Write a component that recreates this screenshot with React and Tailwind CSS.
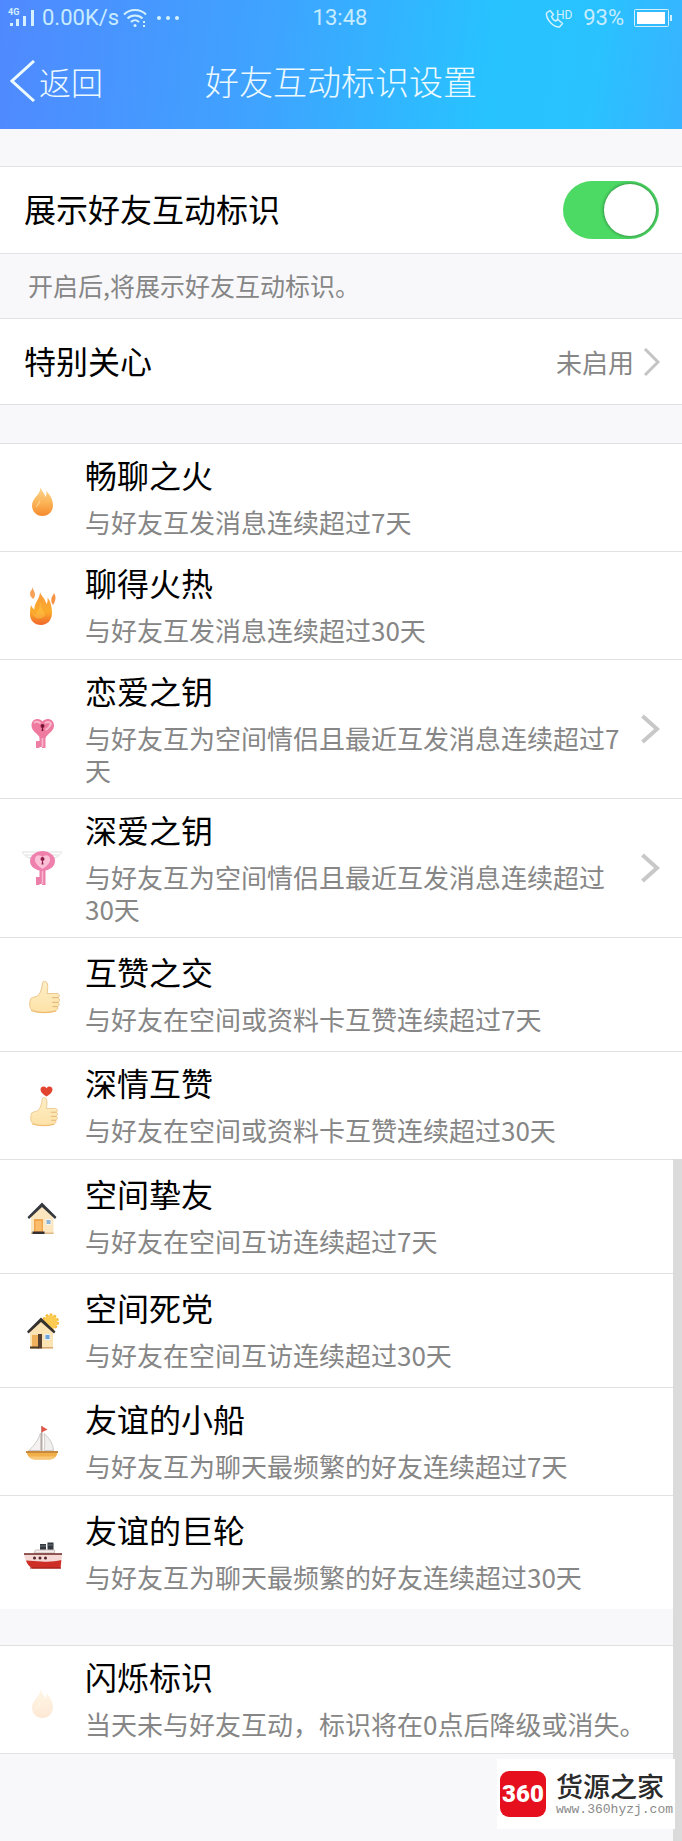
import { useState } from "react"

function Flame() {
  return (
    <>
      <defs>
        <linearGradient id="flame" x1="0" y1="0" x2="0" y2="1">
          <stop offset="0" stopColor="#fbd792" />
          <stop offset="0.55" stopColor="#fbb355" />
          <stop offset="1" stopColor="#f58a2e" />
        </linearGradient>
      </defs>
      <path
        d="M20.500 11c1 4 4 6 5 10 1-2 1.200-4 .9-6 3 3 6.600 8.500 6.600 14 0 6.500-4.500 11-10.500 11S12 35.500 12 29.500c0-4 2-6.500 4.500-9.500 2-2.500 4.200-5 4-9z"
        fill="url(#flame)"
      />
      <path d="M20 22c.5 4-4 5-4 10 2-3 5-4 4-10z" fill="#ffe0a4" opacity="0.6" />
    </>
  )
}

function BigFlame() {
  return (
    <>
      <defs>
        <linearGradient id="bigFlame" x1="0" y1="0" x2="0" y2="1">
          <stop offset="0" stopColor="#fb9a3c" />
          <stop offset="0.6" stopColor="#fbab2b" />
          <stop offset="1" stopColor="#f0652a" />
        </linearGradient>
      </defs>
      <path
        d="M20 8c1 4 5 6 6.500 12 1-1.500 1.400-4 1-6.500C30.500 17 32 23 32 29c0 7-4.500 12-11 12S10 36.500 10 30.500c0-5 .5-7 1-9.500 1 2 2 3.500 3.300 4.500C14.500 18 20 14.500 20 8z"
        fill="url(#bigFlame)"
      />
      <path d="M12 27c1 2 1.500 3 3 3.500C19 27 20 22 20.500 18c1 5 1 9 5 12-2 6-12 7-13.500-3z" fill="#ffc64a" opacity="0.5" />
      <path d="M12.500 3c.3 3 2.500 4.500 2.500 7.500 0 2-1 3.500-2 4.500-1.500-1.500-3-3-3-5.500C10 7 12.300 6 12.500 3z" fill="#f8a158" />
      <path d="M34 9c1.500 2 2 5 1 8-.4 1.500-1.200 2.700-2 4-1.200-2-2-3-1.700-6 .2-2.500 2.200-4 2.700-6z" fill="#f69345" />
    </>
  )
}

function HeartKey() {
  return (
    <>
      <path d="M19.500 28h6v13h-3.500v-1h-2.500v1h-3.500v-7h3.500z" fill="#ee7fa4" />
      <path d="M22.500 29v11" stroke="#f9b9cd" strokeWidth="1.500" />
      <path d="M22.500 14.500c-2.500-4-11-3.500-11 4 0 6 7 8.500 8.500 12.500h5.500c1.500-4 8.500-6.500 8.500-12.500 0-7.500-9-8-11.500-4z" fill="#ef7aa0" />
      <path d="M14 16c1.500-2 5-1.500 6.500.5M25 16.500c1.500-2 4.500-2 6 0-1 3-3 5-5.500 6.500" stroke="#f9b8cc" strokeWidth="2" fill="none" />
      <circle cx="22.500" cy="19" r="2" fill="#7b1437" />
      <path d="M22.500 18.500l1 5.500h-2z" fill="#7b1437" />
    </>
  )
}

function WingedKey() {
  return (
    <>
      <path d="M2 6h40M5 9h8M31 9h8M8 11.500h6M30 11.500h6" stroke="#e2e0e1" strokeWidth="1" fill="none" />
      <path d="M2.500 6.500c2 3 4 5 9 6M41.500 6.500c-2 3-4 5-9 6" stroke="#e4e1e2" strokeWidth="1" fill="none" />
      <path d="M19.500 23h6v16h-3.500v-1h-2.500v1h-3.500v-8h3.500z" fill="#ec7fa9" />
      <path d="M22.500 25v13" stroke="#f8b9d0" strokeWidth="1.500" />
      <ellipse cx="22.500" cy="15" rx="12.500" ry="10" fill="#ef7fac" />
      <path d="M22.500 23c-6-4-8-7-7.500-10.500.5-4 6-4.500 7.500-1 1.500-3.500 7-3 7.500 1 .5 3.500-1.500 6.500-7.500 10.500z" fill="#fac0d6" />
      <circle cx="22.500" cy="13" r="2" fill="#8e1c48" />
      <path d="M22.500 13l1 5.500h-2z" fill="#8e1c48" />
    </>
  )
}

function ThumbShape() {
  return (
    <>
      <defs>
        <linearGradient id="thumb" x1="0" y1="0" x2="0" y2="1">
          <stop offset="0" stopColor="#fdeec6" />
          <stop offset="1" stopColor="#fde2a8" />
        </linearGradient>
      </defs>
      <path
        d="M22.500 10c.3-2.500 4.500-2 5 1 .4 3 .2 6-.5 9.500h10c2.600 0 3 3.500 1 4.200 2 .8 2 3.800.2 4.600 1.500 1 1.200 3.600-.6 4.300.8 1.900-.5 3.900-2.800 4.400-5 1.500-12.500 1.700-17 .7-3-.6-6-1.500-7.200-3-1.300-2.500-1.200-7 .2-10.200 2-1.500 5-1.500 6.700-2.500 3-2.500 4.500-7.500 5-13z"
        fill="url(#thumb)"
        stroke="#ecc78c"
        strokeWidth="1"
      />
      <path d="M38 24.700h-6M38.200 29.300h-6M37.500 33.600h-5" stroke="#e2b070" strokeWidth="1" fill="none" />
      <path d="M11 37.500c6 2.500 17 3 25 .5" stroke="#f0b760" strokeWidth="1" fill="none" />
    </>
  )
}

function HeartThumb() {
  return (
    <>
      <path d="M26.500 12.500c-4-2.500-6-4.500-6-7 0-3.500 4.500-4.200 6-1.200 1.500-3 6-2.300 6 1.200 0 2.500-2 4.500-6 7z" fill="#e2452f" />
      <g transform="translate(2 6) scale(0.900)">
        <ThumbShape />
      </g>
    </>
  )
}

function HouseShape() {
  return (
    <>
      <path d="M11 21L22 10l11.500 11v18H11z" fill="#fbe6c0" />
      <path d="M11 39h22.500v-1.500H11z" fill="#e0b988" />
      <path d="M7.500 22L22 7.500 36.500 22 35 24 22 12 9 24z" fill="#35393e" />
      <path d="M14 24h9v13h-9z" fill="#f1a54f" />
      <path d="M15.500 26h6v10h-6z" fill="#fbbd6c" />
      <path d="M26 24.500h5v5h-5z" fill="#8fb4d6" stroke="#f6f2ec" strokeWidth="1" />
      <path d="M12.500 36.500h12V39h-12z" fill="#343030" />
    </>
  )
}

function SunnyHouse() {
  return (
    <>
      <circle cx="30.500" cy="13" r="7" fill="none" stroke="#f5b836" strokeWidth="3" strokeDasharray="2.500 1.500" />
      <circle cx="30.500" cy="13" r="7" fill="#fbcb52" />
      <path d="M10 22l11-11 12 11v17.500H10z" fill="#fbe3b4" />
      <path d="M10 39.500h23V38H10z" fill="#d9a871" />
      <path d="M7 22.500L21 8.500l14.500 14-1.500 2L21 13 8.500 24.500z" fill="#35322f" />
      <path d="M12 26h7v13h-7z" fill="#efb05c" />
      <path d="M18 25h4v14.500h-4z" fill="#574030" />
      <path d="M25 25.500h5v5h-5z" fill="#6aa3d8" stroke="#e8eef4" strokeWidth="1" />
      <path d="M10 37.500h9v2h-9z" fill="#4c3926" />
    </>
  )
}

function Sailboat() {
  return (
    <>
      <path d="M21 6h1.500v27H21z" fill="#b7aaa2" />
      <path d="M21.500 6l6 3.500-6 3z" fill="#e2564a" />
      <path d="M20.500 13v17.500H8.500C13 27 18 21 20.500 13z" fill="#f4f1f0" stroke="#cfcaca" strokeWidth="1" />
      <path d="M24 13.500c5 4 9 10 9.500 17H24c1-6 1-11 0-17z" fill="#f1eeee" stroke="#cfcaca" strokeWidth="1" />
      <path d="M6.500 31.500h31c0 4-3 8-8 8H15c-5 0-8-4-8.500-8z" fill="#f2b04a" />
      <path d="M6 31h32v2H6z" fill="#c98a3e" />
      <path d="M9 36.500c1.500 2 3.500 3 6 3h14.500c2.500 0 4.500-1 6-3z" fill="#f8c777" />
    </>
  )
}

function Steamship() {
  return (
    <>
      <path d="M20 13h6v7h-6zM27.500 11.500h6V20h-6z" fill="#33393e" />
      <path d="M20 15h6M27.500 14h6" stroke="#6d757b" strokeWidth="1" />
      <path d="M14 22l1.500-3h19v3z" fill="#f5efee" stroke="#c9bfbd" strokeWidth="1" />
      <path d="M4 23h38l-1 14.500H12C7.500 34.500 5 29 4 23z" fill="#f4d9d6" />
      <path d="M6 29.500c1 3 3 6 6.500 8h28l.8-8.500c-6 1.500-12 2-20 1.500z" fill="#cd2f27" />
      <path d="M4 23h38" stroke="#6e2522" strokeWidth="1.500" />
      <path d="M10 37h31" stroke="#9c1f1a" strokeWidth="1" />
      <circle cx="14.500" cy="27" r="1.500" fill="#54282a" />
      <circle cx="20" cy="27" r="1.500" fill="#54282a" />
      <circle cx="25.500" cy="27" r="1.500" fill="#54282a" />
    </>
  )
}

const badges = [
  { title: "畅聊之火", desc: "与好友互发消息连续超过7天", icon: Flame },
  { title: "聊得火热", desc: "与好友互发消息连续超过30天", icon: BigFlame },
  { title: "恋爱之钥", desc: "与好友互为空间情侣且最近互发消息连续超过7天", icon: HeartKey, link: true },
  { title: "深爱之钥", desc: "与好友互为空间情侣且最近互发消息连续超过30天", icon: WingedKey, link: true },
  { title: "互赞之交", desc: "与好友在空间或资料卡互赞连续超过7天", icon: ThumbShape, roomy: true },
  { title: "深情互赞", desc: "与好友在空间或资料卡互赞连续超过30天", icon: HeartThumb },
  { title: "空间挚友", desc: "与好友在空间互访连续超过7天", icon: HouseShape, roomy: true },
  { title: "空间死党", desc: "与好友在空间互访连续超过30天", icon: SunnyHouse, roomy: true },
  { title: "友谊的小船", desc: "与好友互为聊天最频繁的好友连续超过7天", icon: Sailboat },
  { title: "友谊的巨轮", desc: "与好友互为聊天最频繁的好友连续超过30天", icon: Steamship, roomy: true },
]

function BadgeRow({ title, desc, icon: Icon, link, roomy, faded }) {
  const Row = link ? "button" : "div"
  const padding = roomy ? "pt-[10px] pb-4" : link ? "pt-[7px] pb-3" : "pt-[7px] pb-[13px]"

  return (
    <li className="border-t border-[#e1e1e3] bg-white">
      <Row className="flex w-full items-center pl-5 pr-5 text-left">
        <svg
          viewBox="0 0 44 44"
          className={`size-11 shrink-0 ${faded ? "opacity-20" : ""}`}
          aria-hidden="true"
        >
          <Icon />
        </svg>
        <span className={`ml-[21px] block min-w-0 flex-1 ${padding}`}>
          <span className="block text-[32px] leading-[46px] text-black">{title}</span>
          <span className="mt-[9px] block text-[26px] leading-8 text-[#868686]">{desc}</span>
        </span>
        {link && (
          <svg viewBox="0 0 22 30" className="ml-3 h-[30px] w-[22px] shrink-0" aria-hidden="true">
            <path d="M2.500 2L17 15 2.500 28" fill="none" stroke="#c8c8c8" strokeWidth="4" />
          </svg>
        )}
      </Row>
    </li>
  )
}

function StatusBar() {
  return (
    <div className="grid h-9 grid-cols-[1fr_auto_1fr] items-center pl-2 pr-[10px] font-['Roboto',sans-serif] text-[22px] leading-none text-[#c8ecff]">
      <div className="flex items-center">
        <svg viewBox="0 0 28 22" className="h-[22px] w-7" fill="#d5f1ff" aria-hidden="true">
          <text x="0" y="8" fontSize="9" fontWeight="700">4G</text>
          <path d="M2 16h3v3H2zM8 12h3v7H8zM15 9h3v10h-3zM23 3h3v16h-3z" />
        </svg>
        <span className="ml-[6px]">0.00K/s</span>
        <svg viewBox="0 0 24 20" className="ml-1 h-5 w-6" fill="none" stroke="#d5f1ff" strokeWidth="2" aria-hidden="true">
          <path d="M1 6.500c6-6 16-6 22 0M4.500 10.500c4-4 11-4 15 0M8 14c2.500-2.500 5.500-2.500 8 0" />
          <circle cx="12" cy="17.500" r="1.500" fill="#d5f1ff" stroke="none" />
          <path d="M21 13v2M21 17v2" />
        </svg>
        <svg viewBox="0 0 22 4" className="ml-[10px] h-1 w-[22px]" fill="#d5f1ff" aria-hidden="true">
          <circle cx="2" cy="2" r="2" />
          <circle cx="11" cy="2" r="2" />
          <circle cx="20" cy="2" r="2" />
        </svg>
      </div>
      <span>13:48</span>
      <div className="flex items-center justify-end">
        <svg viewBox="0 0 28 22" className="h-[22px] w-7" aria-hidden="true">
          <path
            d="M5 3.500L1.500 6c-.8 6 7 14.500 13 14l3-3.500-4.500-4-2.500 1.500C8.500 13 7 11 6.500 9.500L8.500 7.500z"
            fill="none"
            stroke="#d5f1ff"
            strokeWidth="1.500"
            strokeLinejoin="round"
          />
          <text x="11" y="12" fontSize="12" fill="#d5f1ff">HD</text>
        </svg>
        <span className="ml-[10px]">93%</span>
        <svg viewBox="0 0 38 18" className="ml-[10px] h-[18px] w-[38px]" aria-hidden="true">
          <rect x="0.500" y="0.500" width="34" height="17" rx="1" fill="none" stroke="#d5f1ff" />
          <rect x="3" y="3" width="28" height="12" fill="#fff" />
          <path d="M36 6h2v6h-2z" fill="#d5f1ff" />
        </svg>
      </div>
    </div>
  )
}

export default function App() {
  const [enabled, setEnabled] = useState(true)

  return (
    <div className="relative min-h-screen bg-[#f8f8fb] font-['Noto_Sans_CJK_SC',sans-serif]">
      <header className="bg-[linear-gradient(98deg,#5089ff_0%,#3ea4ff_40%,#27c3ff_72%,#29c2ff_86%,#38b3ff_100%)]">
        <StatusBar />
        <div className="grid h-[93px] grid-cols-[1fr_auto_1fr] items-center px-[10px] pb-1 text-[#ecfaff]">
          <button className="flex items-center gap-[3px] justify-self-start text-[32px] leading-none font-light">
            <svg viewBox="0 0 26 42" className="h-[42px] w-[26px]" aria-hidden="true">
              <path d="M24 1L2 21l22 20" fill="none" stroke="#ecfaff" strokeWidth="3" />
            </svg>
            返回
          </button>
          <h1 className="text-[34px] leading-none font-light">好友互动标识设置</h1>
        </div>
      </header>

      <main>
        <label className="mt-[37px] flex h-[87px] items-center justify-between border-t border-[#e1e1e3] bg-white pl-6 pr-[23px]">
          <span className="pb-1 text-[32px] text-black">展示好友互动标识</span>
          <input
            type="checkbox"
            role="switch"
            checked={enabled}
            onChange={(e) => setEnabled(e.target.checked)}
            className="flex h-[58px] w-24 cursor-pointer appearance-none items-center rounded-full bg-[#d8d8d8] p-[3px] before:size-[52px] before:rounded-full before:bg-white before:shadow-[0_0_3px_1px_rgba(0,0,0,0.3)] checked:justify-end checked:bg-[#4cd964]"
          />
        </label>

        <p className="flex h-[66px] items-center border-y border-[#e1e1e6] px-7 text-[25px] text-[#868686]">
          开启后,将展示好友互动标识。
        </p>

        <button className="flex h-[86px] w-full items-center border-b border-[#e1e1e3] bg-white pl-6 pr-[22px]">
          <span className="pb-1 text-[32px] text-black">特别关心</span>
          <span className="ml-auto text-[26px] text-[#868686]">未启用</span>
          <svg viewBox="0 0 17 28" className="ml-[9px] h-7 w-[17px]" aria-hidden="true">
            <path d="M2 1l13 13L2 27" fill="none" stroke="#c4c4c4" strokeWidth="3" />
          </svg>
        </button>

        <ul className="mt-[38px]">
          {badges.map((badge) => (
            <BadgeRow key={badge.title} {...badge} />
          ))}
        </ul>

        <ul className="mt-9 border-b border-[#e1e1e3]">
          <BadgeRow
            title="闪烁标识"
            desc="当天未与好友互动，标识将在0点后降级或消失。"
            icon={Flame}
            faded
          />
        </ul>
      </main>

      {/* scroll bar */}
      <div className="absolute right-0 bottom-0 h-[682px] w-[9px] bg-[#dbdbdb]" />

      {/* site mark */}
      <a
        href="#"
        className="absolute right-[7px] bottom-3 flex h-[70px] items-center gap-[10px] bg-white pl-[3px] pr-[2px]"
      >
        <span className="flex size-[46px] items-center justify-center rounded-[9px] bg-[#e60f1e] font-['Liberation_Sans_Narrow','Roboto',sans-serif] text-[24px] leading-none font-black text-white">
          360
        </span>
        <span className="block">
          <span className="block text-[27px] leading-8 font-medium text-[#2b2b2b]">货源之家</span>
          <span className="block font-['Liberation_Mono',monospace] text-[13px] leading-4 text-[#8a8a8a]">
            www.360hyzj.com
          </span>
        </span>
      </a>
    </div>
  )
}
